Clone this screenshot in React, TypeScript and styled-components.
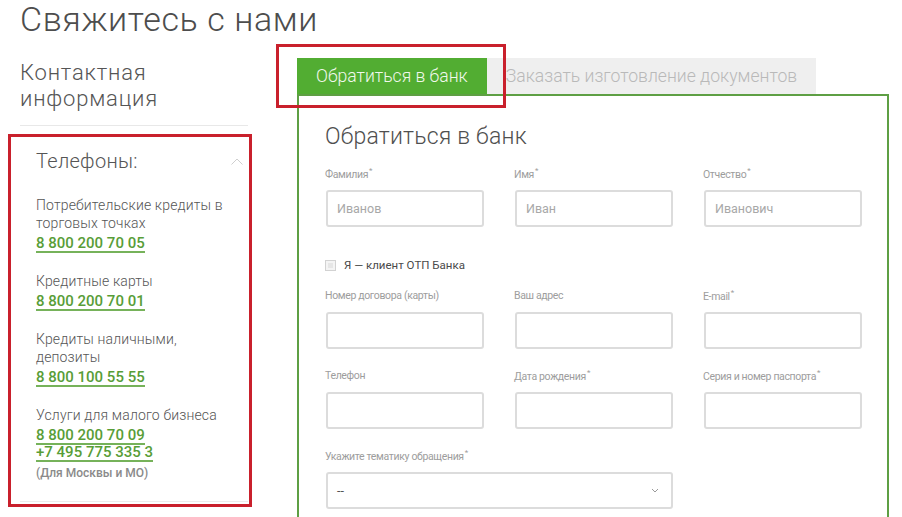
import React from "react";
import styled, { createGlobalStyle } from "styled-components";

const Global = createGlobalStyle`
  html, body { margin: 0; padding: 0; background: #fff; overflow: hidden; }
  body { font-family: Roboto, "Noto Sans", Arial, sans-serif; color: #555; }
  * { box-sizing: border-box; }
`;

const Page = styled.div`
  padding-left: 20px;
  width: 902px;
  height: 517px;
  overflow: hidden;
`;

const Title = styled.h1`
  margin: 0;
  font-size: 34px;
  line-height: 38px;
  font-weight: 300;
  letter-spacing: 0.6px;
  color: #4d4d4d;
`;

const Columns = styled.div`
  display: flex;
  gap: 49px;
  align-items: flex-start;
`;

const Side = styled.aside`
  width: 228px;
  flex: none;
`;

const SideTitle = styled.h2`
  margin: 22px 0 0;
  padding-bottom: 13px;
  border-bottom: 1px solid #e8e8e8;
  font-size: 22px;
  line-height: 26px;
  font-weight: 300;
  letter-spacing: 0.8px;
  color: #555;
`;

const PhoneSection = styled.section`
  position: relative;
  padding: 22px 5px 20px 16px;
  border-bottom: 1px solid #ececec;
`;

const Highlight = styled.div<{ $inset: string }>`
  position: absolute;
  inset: ${(p) => p.$inset};
  border: 3px solid #c9202c;
  pointer-events: none;
  z-index: 5;
`;

const SectionHead = styled.div`
  display: flex;
  justify-content: space-between;
  align-items: center;
  font-size: 20px;
  line-height: 26px;
  font-weight: 300;
  letter-spacing: 0.3px;
  color: #555;
  margin-bottom: 22px;
`;

const Item = styled.div`
  margin-bottom: 19px;
  &:last-child { margin-bottom: 0; }
`;

const ItemLabel = styled.div`
  font-size: 14px;
  line-height: 18px;
  font-weight: 300;
  letter-spacing: 0.15px;
  color: #555;
  margin-bottom: 4px;
`;

const Phone = styled.a`
  display: inline-block;
  font-size: 15px;
  line-height: 15px;
  font-weight: 500;
  color: #589d37;
  text-decoration: none;
  border-bottom: 2px solid #76b25a;
`;

const PhoneList = styled.div`
  display: flex;
  flex-direction: column;
  align-items: flex-start;
`;

const Note = styled.div`
  font-size: 12px;
  line-height: 15px;
  color: #8a8a8a;
  font-weight: 500;
  margin-top: 4px;
`;

const Main = styled.main`
  width: 592px;
  flex: none;
  margin-top: 20px;
`;

const Tabs = styled.div`
  display: flex;
  height: 36px;
`;

const Tab = styled.div<{ $active?: boolean }>`
  position: relative;
  padding: 0 19px;
  display: flex;
  align-items: center;
  font-size: 17.6px;
  font-weight: 300;
  background: ${(p) => (p.$active ? "#52ad32" : "#efefef")};
  color: ${(p) => (p.$active ? "#f1f8ec" : "#b9b9b9")};
`;

const Panel = styled.div`
  border: 2px solid #5e9f44;
  padding: 28px 26px 40px 27px;
  height: 460px;
`;

const PanelTitle = styled.h3`
  margin: 0 0 17px -1px;
  font-size: 23px;
  line-height: 26px;
  font-weight: 300;
  letter-spacing: 0.2px;
  color: #4f4f4f;
`;

const Grid = styled.div`
  display: grid;
  grid-template-columns: repeat(3, 158px);
  column-gap: 31px;
`;

const Field = styled.div<{ $span?: number }>`
  grid-column: span ${(p) => p.$span ?? 1};
  margin-bottom: 20px;
`;

const Label = styled.div<{ $req?: boolean }>`
  height: 23px;
  padding-top: ${(p) => (p.$req ? 1 : 0)}px;
  margin-left: -1px;
  font-size: 10.5px;
  letter-spacing: -0.35px;
  line-height: 14px;
  color: #9d9d9d;
  white-space: nowrap;
  sup {
    font-size: 8px;
    line-height: 0;
    vertical-align: 5px;
    margin-left: 1px;
  }
`;

const Input = styled.div`
  height: 37px;
  border: 2px solid #dcdcdc;
  border-radius: 3px;
  padding: 0 9px;
  display: flex;
  align-items: center;
  font-size: 12.5px;
  color: #a8a8a8;
`;

const SelectBox = styled(Input)`
  justify-content: space-between;
  color: #555;
  padding-right: 12px;
`;

const CheckRow = styled.label`
  display: flex;
  align-items: center;
  gap: 8px;
  margin: 13px 0 19px -1px;
  font-size: 11.5px;
  color: #4a4a4a;
  height: 10px;
`;

const Check = styled.span`
  width: 11px;
  height: 11px;
  border: 1px solid #d2d2d2;
  background: #e6e6e6;
  box-shadow: inset 0 0 0 2px #f4f4f4;
`;

const Chevron = ({ up }: { up?: boolean }) => (
  <svg width={up ? 12 : 8} height={up ? 7 : 5} viewBox={up ? "0 0 12 7" : "0 0 8 5"}>
    {up ? (
      <polyline points="0.5,6.5 6,1 11.5,6.5" fill="none" stroke="#cfcfcf" strokeWidth="1" />
    ) : (
      <polyline points="1,1 4,4 7,1" fill="none" stroke="#9a9a9a" strokeWidth="1" />
    )}
  </svg>
);

const phones = [
  { label: "Потребительские кредиты в торговых точках", nums: ["8 800 200 70 05"] },
  { label: "Кредитные карты", nums: ["8 800 200 70 01"] },
  { label: "Кредиты наличными, депозиты", nums: ["8 800 100 55 55"] },
  { label: "Услуги для малого бизнеса", nums: ["8 800 200 70 09", "+7 495 775 335 3"], note: "(Для Москвы и МО)" },
];

const row1 = [
  { label: "Фамилия", req: true, ph: "Иванов" },
  { label: "Имя", req: true, ph: "Иван" },
  { label: "Отчество", req: true, ph: "Иванович" },
];
const row2 = [
  { label: "Номер договора (карты)", req: false, ph: "" },
  { label: "Ваш адрес", req: false, ph: "" },
  { label: "E-mail", req: true, ph: "" },
  { label: "Телефон", req: false, ph: "" },
  { label: "Дата рождения", req: true, ph: "" },
  { label: "Серия и номер паспорта", req: true, ph: "" },
];

type F = { label: string; req: boolean; ph: string };
const renderField = (f: F) => (
  <Field key={f.label}>
    <Label $req={f.req}>
      {f.label}
      {f.req && <sup>*</sup>}
    </Label>
    <Input>{f.ph}</Input>
  </Field>
);

export default function App() {
  return (
    <Page>
      <Global />
      <Title>Свяжитесь с нами</Title>
      <Columns>
        <Side>
          <SideTitle>
            Контактная
            <br />
            информация
          </SideTitle>
          <PhoneSection>
            <Highlight $inset="8px -4px -6px -12px" />
            <SectionHead>
              Телефоны:
              <Chevron up />
            </SectionHead>
            {phones.map((p) => (
              <Item key={p.label}>
                <ItemLabel>{p.label}</ItemLabel>
                <PhoneList>
                  {p.nums.map((n) => (
                    <Phone key={n}>{n}</Phone>
                  ))}
                </PhoneList>
                {p.note && <Note>{p.note}</Note>}
              </Item>
            ))}
          </PhoneSection>
        </Side>
        <Main>
          <Tabs>
            <Tab $active>
              Обратиться в банк
              <Highlight $inset="-14px -19px -14px -21px" />
            </Tab>
            <Tab>Заказать изготовление документов</Tab>
          </Tabs>
          <Panel>
            <PanelTitle>Обратиться в банк</PanelTitle>
            <Grid>{row1.map(renderField)}</Grid>
            <CheckRow>
              <Check />Я — клиент ОТП Банка
            </CheckRow>
            <Grid>
              {row2.map(renderField)}
              <Field $span={2}>
                <Label $req>
                  Укажите тематику обращения<sup>*</sup>
                </Label>
                <SelectBox>
                  <span>--</span>
                  <Chevron />
                </SelectBox>
              </Field>
            </Grid>
          </Panel>
        </Main>
      </Columns>
    </Page>
  );
}
